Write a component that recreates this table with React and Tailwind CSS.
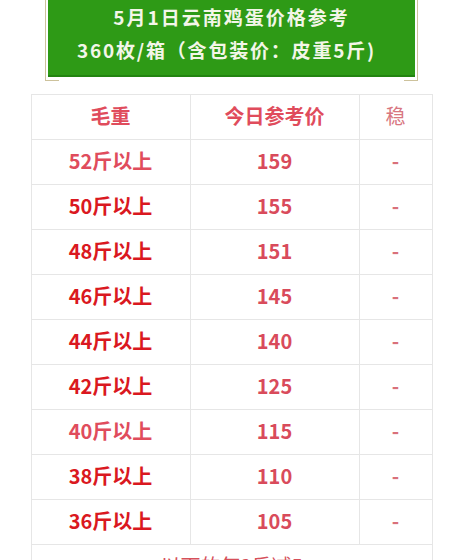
import React from "react";

const rows = [
  { w: "52斤以上", p: "159", light: true },
  { w: "50斤以上", p: "155" },
  { w: "48斤以上", p: "151" },
  { w: "46斤以上", p: "145" },
  { w: "44斤以上", p: "140" },
  { w: "42斤以上", p: "125" },
  { w: "40斤以上", p: "115", light: true },
  { w: "38斤以上", p: "110" },
  { w: "36斤以上", p: "105" },
];

export default function App() {
  return (
    <div
      className="w-[463px] h-[560px] overflow-hidden bg-white"
      style={{ fontFamily: '"Noto Sans CJK SC", "Noto Sans", sans-serif' }}
    >
      <div className="relative mx-auto w-[373px] border-x border-[#cdc29c] px-[2px] pb-[4px]">
        <div className="flex h-[77px] flex-col items-center bg-[#2e9a16] border-b-2 border-[#238410] text-[19px] font-bold leading-[33px] tracking-[2px] text-[#f3f6e8]">
          <div>5月1日云南鸡蛋价格参考</div>
          <div className="pr-[10px] tracking-[1.8px]">360枚/箱（含包装价：皮重5斤)</div>
        </div>
        <div className="absolute -left-px bottom-0 h-px w-[14px] bg-[#cdc29c]"></div>
        <div className="absolute -right-px bottom-0 h-px w-[14px] bg-[#cdc29c]"></div>
      </div>

      <table className="mx-auto mt-[13px] w-[401px] table-fixed border-collapse text-center text-[20px]">
        <colgroup>
          <col className="w-[159px]" />
          <col className="w-[169px]" />
          <col className="w-[73px]" />
        </colgroup>
        <tbody>
          <tr className="h-[45px]">
            <td className="border border-[#e6e6e6] pb-[2px] font-bold text-[#e04c5c]">毛重</td>
            <td className="border border-[#e6e6e6] pb-[2px] font-bold text-[#e04c5c]">今日参考价</td>
            <td className="border border-[#e6e6e6] pb-[2px] text-[#d87680]">稳</td>
          </tr>
          {rows.map((r) => (
            <tr key={r.w} className="h-[45px]">
              <td
                className={
                  "border border-[#e6e6e6] pb-[2px] font-bold " +
                  (r.light ? "text-[#e04c5c]" : "text-[#da1820]")
                }
              >
                {r.w}
              </td>
              <td className="border border-[#e6e6e6] pb-[2px] font-bold text-[#d94b5b]">{r.p}</td>
              <td className="border border-[#e6e6e6] pb-[2px] font-bold text-[#d9707a]">-</td>
            </tr>
          ))}
          <tr className="h-[45px]">
            <td colSpan={3} className="border border-[#e6e6e6] pb-[2px] text-[#d6505a]">
              以下的每2斤减5
            </td>
          </tr>
        </tbody>
      </table>
    </div>
  );
}
